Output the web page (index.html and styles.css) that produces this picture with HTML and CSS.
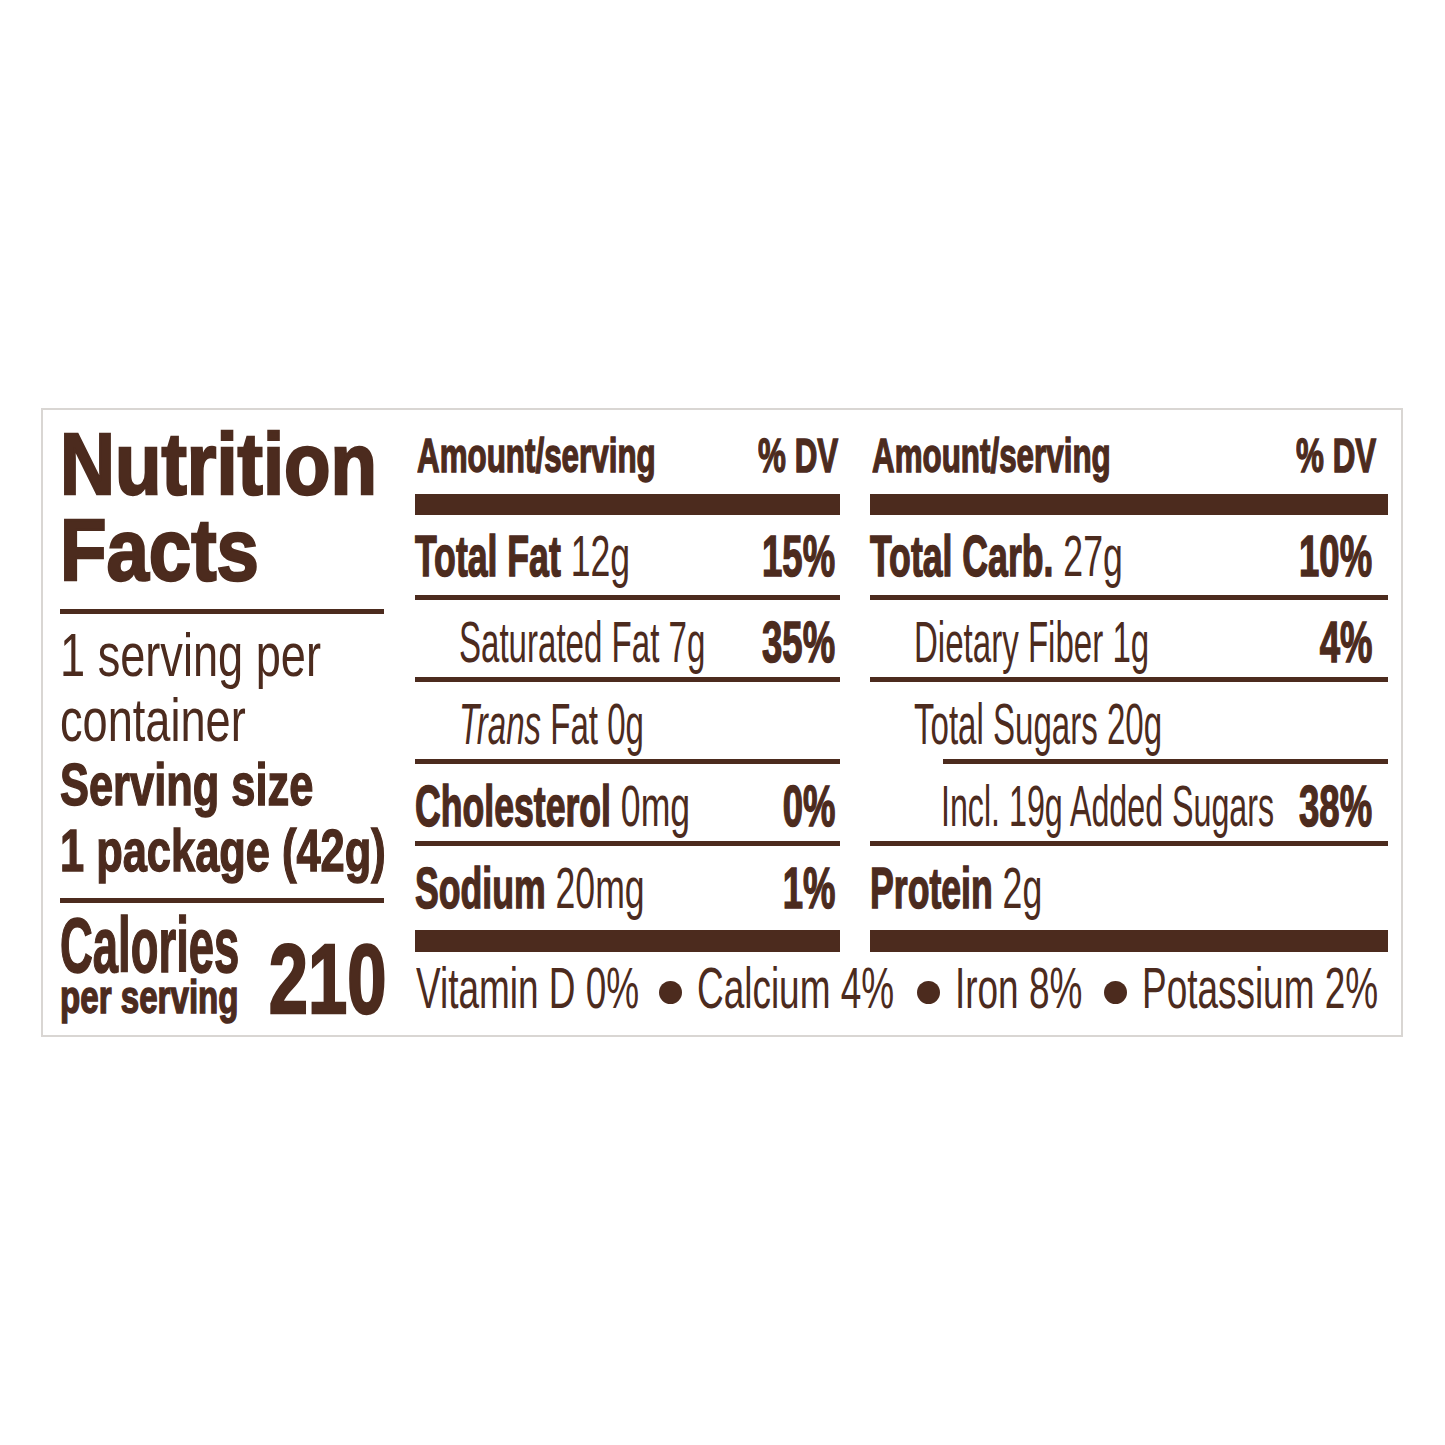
FILE: index.html
```html
<!DOCTYPE html>
<html lang="en">
<head>
<meta charset="utf-8">
<title>Nutrition Facts</title>
<link rel="stylesheet" href="styles.css">
</head>
<body>
<div class="label">
  <div class="left">
    <h1 class="title"><span class="c c-title">Nutrition<br>Facts</span></h1>
    <div class="lrule"></div>
    <div class="serv"><span class="c c-serv">1 serving per<br>container</span></div>
    <div class="ssize"><span class="c c-ssize">Serving size<br>1 package (42g)</span></div>
    <div class="lrule lrule-b"></div>
    <div class="cal">
      <div class="cal-lbl">
        <div class="cal-word"><span class="c c-calw">Calories</span></div>
        <div class="cal-per"><span class="c c-calp">per serving</span></div>
      </div>
      <div class="cal-num"><span class="c cr c-num">210</span></div>
    </div>
  </div>

  <div class="col col-mid">
    <div class="hdr"><span class="cell"><span class="c c-h">Amount/serving</span></span><span class="dv"><span class="c cr c-h">% DV</span></span></div>
    <div class="bar"></div>
    <div class="row first"><span class="cell"><span class="c c-b"><b>Total Fat</b> 12g</span></span><span class="dv"><span class="c cr c-p"><b>15%</b></span></span></div>
    <div class="rule"></div>
    <div class="row sub"><span class="cell"><span class="c c-r">Saturated Fat 7g</span></span><span class="dv"><span class="c cr c-p"><b>35%</b></span></span></div>
    <div class="rule"></div>
    <div class="row sub"><span class="cell"><span class="c c-r"><i>Trans</i> Fat 0g</span></span><span class="dv"></span></div>
    <div class="rule"></div>
    <div class="row"><span class="cell"><span class="c c-b"><b>Cholesterol</b> 0mg</span></span><span class="dv"><span class="c cr c-p"><b>0%</b></span></span></div>
    <div class="rule"></div>
    <div class="row last"><span class="cell"><span class="c c-b"><b>Sodium</b> 20mg</span></span><span class="dv"><span class="c cr c-p"><b>1%</b></span></span></div>
    <div class="bar bar-b"></div>
  </div>

  <div class="col col-right">
    <div class="hdr"><span class="cell"><span class="c c-h">Amount/serving</span></span><span class="dv"><span class="c cr c-h">% DV</span></span></div>
    <div class="bar"></div>
    <div class="row first"><span class="cell"><span class="c c-b"><b>Total Carb.</b> 27g</span></span><span class="dv"><span class="c cr c-p"><b>10%</b></span></span></div>
    <div class="rule"></div>
    <div class="row sub"><span class="cell"><span class="c c-r">Dietary Fiber 1g</span></span><span class="dv"><span class="c cr c-p"><b>4%</b></span></span></div>
    <div class="rule"></div>
    <div class="row sub"><span class="cell"><span class="c c-r">Total Sugars 20g</span></span><span class="dv"></span></div>
    <div class="rule rule-ind"></div>
    <div class="row sub2"><span class="cell"><span class="c c-r2">Incl. 19g Added Sugars</span></span><span class="dv"><span class="c cr c-p"><b>38%</b></span></span></div>
    <div class="rule"></div>
    <div class="row last"><span class="cell"><span class="c c-b"><b>Protein</b> 2g</span></span><span class="dv"></span></div>
    <div class="bar bar-b"></div>
  </div>

  <div class="vit">
    <span class="vseg v1"><span class="c c-v">Vitamin D 0%</span></span>
    <span class="dot"></span>
    <span class="vseg v2"><span class="c c-v">Calcium 4%</span></span>
    <span class="dot"></span>
    <span class="vseg v3"><span class="c c-v">Iron 8%</span></span>
    <span class="dot"></span>
    <span class="vseg v4"><span class="c c-v">Potassium 2%</span></span>
  </div>
</div>
</body>
</html>
```

FILE: styles.css
```css
* {
  box-sizing: border-box;
  margin: 0;
  padding: 0;
}

html, body {
  background: #ffffff;
}

body {
  font-family: "Liberation Sans", Arial, sans-serif;
  color: #4c2b1e;
  width: 1445px;
  height: 1445px;
  overflow: hidden;
}

.label {
  margin: 408px 0 0 41px;
  width: 1362px;
  height: 629px;
  border: 2px solid #d9d6d3;
  padding: 0 13px 0 17px;
  display: grid;
  grid-template-columns: 327px 453px 548px;
  grid-template-rows: 542px auto;
  overflow: hidden;
}

/* condensed text helper */
.c {
  display: inline-block;
  white-space: nowrap;
  transform-origin: left center;
}
.cr {
  transform-origin: right center;
}

b {
  font-weight: 700;
  -webkit-text-stroke: 1.5px #4c2b1e;
}

/* ---------- left column ---------- */
.left {
  grid-row: 1 / 3;
  grid-column: 1;
  min-width: 0;
}

.title {
  font-size: 87px;
  line-height: 86px;
  font-weight: 700;
  padding-top: 11px;
  -webkit-text-stroke: 2.4px #4c2b1e;
}
.c-title { transform: scaleX(0.875); }

.lrule {
  width: 324px;
  height: 5px;
  margin-top: 16px;
  background: #4c2b1e;
}
.lrule-b {
  margin-top: 14px;
}

.serv {
  padding-top: 9px;
  font-size: 61px;
  line-height: 65px;
}
.c-serv { transform: scaleX(0.74); }

.ssize {
  margin-top: -1px;
  font-size: 58.5px;
  line-height: 66px;
  font-weight: 700;
  -webkit-text-stroke: 1.4px #4c2b1e;
}
.c-ssize { transform: scaleX(0.742); }

.cal {
  display: grid;
  grid-template-columns: minmax(0, 1fr) auto;
  padding-top: 7px;
  font-weight: 700;
  -webkit-text-stroke: 1.5px #4c2b1e;
}
.cal-lbl {
  min-width: 0;
  white-space: nowrap;
}
.cal-word {
  font-size: 77px;
  line-height: 70px;
}
.c-calw { transform: scaleX(0.59); }
.cal-per {
  font-size: 46px;
  line-height: 34px;
}
.c-calp { transform: scaleX(0.72); }
.cal-num {
  align-self: end;
  font-size: 98px;
  line-height: 70px;
  white-space: nowrap;
  -webkit-text-stroke: 2.4px #4c2b1e;
}
.c-num { transform: scaleX(0.72); }

/* ---------- table columns ---------- */
.col-mid {
  grid-column: 2;
  grid-row: 1;
  padding-left: 28px;
  min-width: 0;
}
.col-right {
  grid-column: 3;
  grid-row: 1;
  padding-left: 30px;
  min-width: 0;
}

.hdr,
.row {
  display: grid;
  grid-template-columns: minmax(0, 1fr) auto;
  white-space: nowrap;
}
.cell,
.dv {
  display: block;
}

.hdr {
  height: 84px;
  padding-top: 18px;
  padding-right: 2px;
  padding-left: 2px;
  font-size: 49px;
  line-height: 55px;
  font-weight: 700;
  -webkit-text-stroke: 1.5px #4c2b1e;
}
.col-right .hdr {
  padding-right: 12px;
}
.c-h { transform: scaleX(0.64); }

.bar {
  height: 21px;
  background: #4c2b1e;
}
.bar-b {
  height: 22px;
}

.rule {
  height: 5px;
  background: #4c2b1e;
}
.rule-ind {
  margin-left: 73px;
}

.row {
  height: 77px;
  padding-top: 4px;
  padding-right: 5px;
  font-size: 57px;
  line-height: 77px;
}
.row.first {
  height: 80px;
  padding-top: 3px;
}
.row.last {
  height: 84px;
}
.col-right .row {
  padding-right: 16px;
}
.row.sub {
  padding-left: 44px;
}
.row.sub2 {
  padding-left: 71px;
}

.c-b { transform: scaleX(0.625); }
.c-r { transform: scaleX(0.58); }
.c-r2 { transform: scaleX(0.565); }
.c-p { transform: scaleX(0.64); }

/* ---------- vitamins line ---------- */
.vit {
  grid-column: 2 / 4;
  grid-row: 2;
  display: flex;
  align-items: flex-start;
  padding-top: 8px;
  padding-left: 29px;
  font-size: 57px;
  line-height: 57px;
  white-space: nowrap;
}
.vseg {
  display: block;
  flex: none;
}
.v1 { width: 221px; }
.v2 { width: 198px; }
.v3 { width: 127px; }
.v4 { width: 237px; }
.c-v { transform: scaleX(0.648); }

.dot {
  flex: none;
  width: 23px;
  height: 23px;
  border-radius: 50%;
  background: #4c2b1e;
  margin: 21px 15px 0 22px;
}
```
